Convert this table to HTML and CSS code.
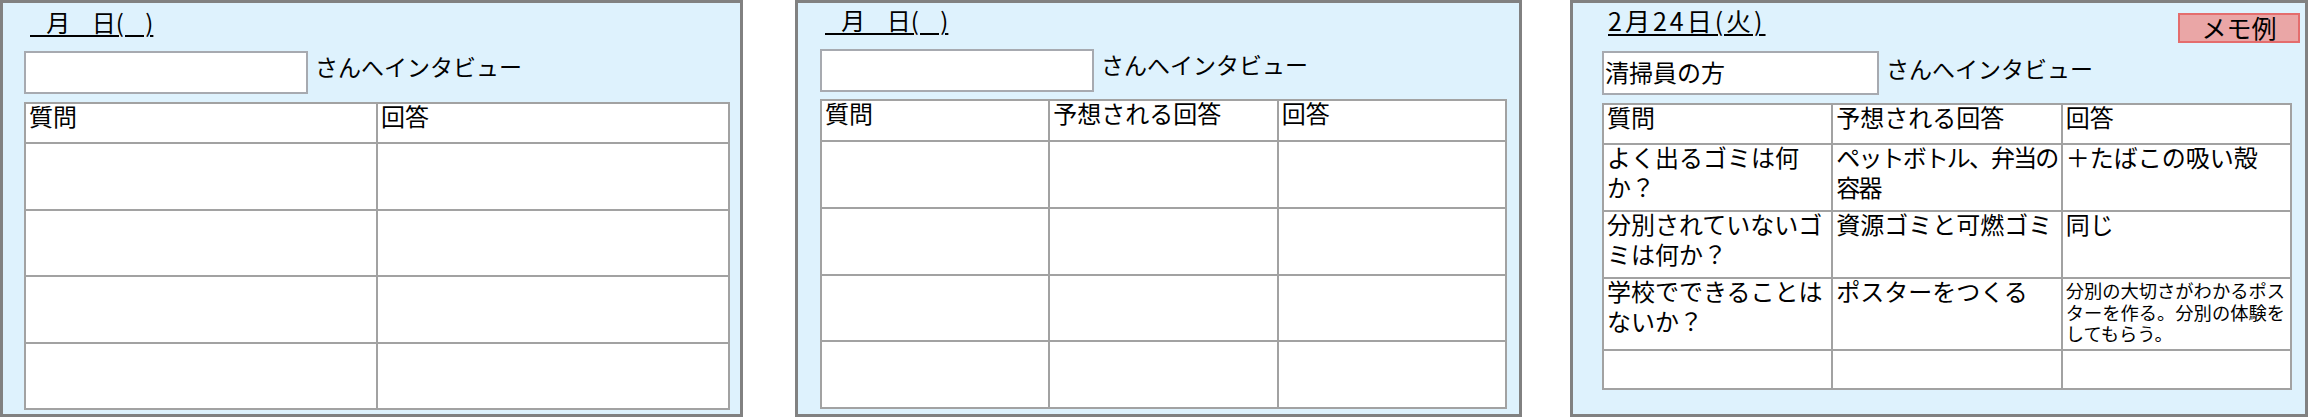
FILE: index.html
```html
<!DOCTYPE html>
<html lang="ja">
<head>
<meta charset="utf-8">
<title>インタビューメモ</title>
<link rel="stylesheet" href="styles.css">
</head>
<body>
<main class="sheets">
  <section class="sheet sheet-1">
    <div class="sheet-head">
      <span class="date date-blank">&nbsp;&nbsp;&nbsp;月&nbsp;&nbsp;&nbsp;&nbsp;日(&nbsp;&nbsp;&nbsp;&nbsp;)</span>
    </div>
    <div class="name-row">
      <div class="name-box"></div>
      <span class="name-label">さんへインタビュー</span>
    </div>
    <table class="grid grid-2">
      <colgroup><col><col></colgroup>
      <tr class="r-head"><td><div class="c">質問</div></td><td><div class="c">回答</div></td></tr>
      <tr class="r-body"><td></td><td></td></tr>
      <tr class="r-body"><td></td><td></td></tr>
      <tr class="r-body r-light"><td></td><td></td></tr>
      <tr class="r-body"><td></td><td></td></tr>
    </table>
  </section>

  <section class="sheet sheet-2">
    <div class="sheet-head">
      <span class="date date-blank">&nbsp;&nbsp;&nbsp;月&nbsp;&nbsp;&nbsp;&nbsp;日(&nbsp;&nbsp;&nbsp;&nbsp;)</span>
    </div>
    <div class="name-row">
      <div class="name-box"></div>
      <span class="name-label">さんへインタビュー</span>
    </div>
    <table class="grid grid-3">
      <tr class="r-head"><td><div class="c">質問</div></td><td><div class="c">予想される回答</div></td><td><div class="c">回答</div></td></tr>
      <tr class="r-body"><td></td><td></td><td></td></tr>
      <tr class="r-body"><td></td><td></td><td></td></tr>
      <tr class="r-body"><td></td><td></td><td></td></tr>
      <tr class="r-body"><td></td><td></td><td></td></tr>
    </table>
  </section>

  <section class="sheet sheet-3">
    <div class="sheet-head">
      <span class="date date-filled">2月24日(火)</span>
      <span class="memo-badge">メモ例</span>
    </div>
    <div class="name-row">
      <div class="name-box"><span class="name-value">清掃員の方</span></div>
      <span class="name-label">さんへインタビュー</span>
    </div>
    <table class="grid grid-3">
      <tr class="r-head"><td><div class="c">質問</div></td><td><div class="c">予想される回答</div></td><td><div class="c">回答</div></td></tr>
      <tr class="r-a"><td><div class="c">よく出るゴミは何か？</div></td><td><div class="c tight">ペットボトル、弁当の容器</div></td><td><div class="c">＋たばこの吸い殻</div></td></tr>
      <tr class="r-b"><td><div class="c">分別されていないゴミは何か？</div></td><td><div class="c">資源ゴミと可燃ゴミ</div></td><td><div class="c">同じ</div></td></tr>
      <tr class="r-c"><td><div class="c">学校でできることはないか？</div></td><td><div class="c">ポスターをつくる</div></td><td><div class="c small">分別の大切さがわかるポスターを作る。分別の体験をしてもらう。</div></td></tr>
      <tr class="r-d"><td></td><td></td><td></td></tr>
    </table>
  </section>
</main>
</body>
</html>
```

FILE: styles.css
```css
* { box-sizing: border-box; }

html, body {
  margin: 0;
  padding: 0;
  background: #ffffff;
}

body {
  font-family: "Noto Sans CJK JP", "Noto Sans", sans-serif;
  color: #000000;
  width: 2317px;
  height: 418px;
  overflow: hidden;
}

.sheets {
  display: flex;
  align-items: flex-start;
}

.sheet {
  height: 417px;
  background: #def2fd;
  border: 3px solid #818181;
  display: flex;
  flex-direction: column;
}

.sheet-1 { width: 743px; padding-left: 21px; }
.sheet-2 { width: 727px; padding-left: 22px; margin-left: 52px; }
.sheet-3 { width: 738px; padding-left: 29px; padding-right: 5px; margin-left: 48px; }

.sheet-head {
  display: flex;
  justify-content: space-between;
  align-items: flex-start;
  height: 48px;
}
.sheet-2 .sheet-head { height: 46px; }

.date {
  margin-left: 6px;
  font-size: 24px;
  line-height: 30px;
  text-decoration: underline;
  text-decoration-thickness: 2px;
  text-underline-offset: 3px;
  white-space: nowrap;
}
.date-blank { padding-top: 4px; }
.sheet-2 .date-blank { margin-left: 5px; padding-top: 2px; }
.date-filled { padding-top: 2px; font-size: 25px; letter-spacing: 3px; }

.memo-badge {
  margin-top: 10px;
  width: 122px;
  height: 30px;
  background: #eaa6a6;
  border: 2px solid #e46d6d;
  font-size: 25px;
  line-height: 24px;
  text-align: center;
}

.name-row {
  display: flex;
  align-items: flex-start;
  gap: 7px;
}

.name-box {
  width: 284px;
  height: 43px;
  background: #ffffff;
  border: 2px solid #a7aab0;
  padding: 4px 1px 0;
  font-size: 24px;
  line-height: 30px;
}
.sheet-2 .name-box { width: 274px; }
.sheet-3 .name-box { width: 277px; height: 44px; }

.name-label {
  font-size: 23px;
  line-height: 30px;
  white-space: nowrap;
}
.sheet-3 .name-label { padding-top: 2px; }

.grid {
  border-collapse: collapse;
  table-layout: fixed;
  background: #ffffff;
  margin-top: 8px;
}
.sheet-2 .grid { margin-top: 7px; }

.grid td {
  border: 2px solid #a2a2a2;
  padding: 0 3px;
  vertical-align: top;
  font-size: 24px;
  line-height: 30px;
}

.grid .c { margin-top: -3px; }

.grid-2 { width: 706px; }
.grid-2 td { width: 50%; }
.sheet-2 .grid-3 { width: 687px; }
.sheet-3 .grid-3 { width: 690px; }
.grid-3 td { width: 33.333%; }

.r-head { height: 40px; }
.sheet-2 .r-head { height: 41px; }
.r-body { height: 66.5px; }
.sheet-2 .r-body { height: 66.75px; }
.r-light td { border-top-color: #c9c9c9; }

.r-a { height: 67px; }
.r-b { height: 67px; }
.r-c { height: 72px; }
.r-d { height: 39px; }

.tight { letter-spacing: -1.9px; }

.grid .small {
  font-size: 18.3px;
  line-height: 21.5px;
  margin-top: 1px;
}
```
